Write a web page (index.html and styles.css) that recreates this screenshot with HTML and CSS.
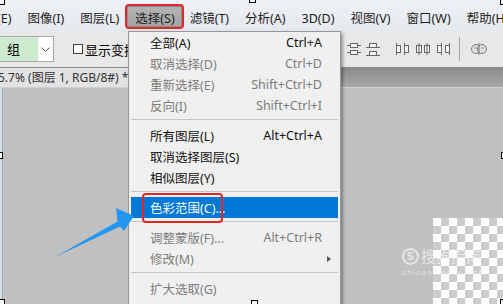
FILE: index.html
```html
<!DOCTYPE html>
<html lang="zh-CN">
<head>
    <meta charset="UTF-8">
    <title>选择菜单</title>
    <link rel="stylesheet" href="styles.css">
</head>
<body>
<div id="app">
    <ul class="menubar">
        <li class="menubar-item first">编辑(E)</li>
        <li class="menubar-item">图像(I)</li>
        <li class="menubar-item">图层(L)</li>
        <li class="menubar-item open">选择(S)<span class="mark"></span></li>
        <li class="menubar-item">滤镜(T)</li>
        <li class="menubar-item">分析(A)</li>
        <li class="menubar-item">3D(D)</li>
        <li class="menubar-item">视图(V)</li>
        <li class="menubar-item">窗口(W)</li>
        <li class="menubar-item">帮助(H)</li>
    </ul>

    <div class="options">
        <div class="select">
            <span class="select-value">组</span>
            <span class="select-arrow">
                <svg width="9" height="5" viewBox="0 0 9 5"><polyline points="0.5,0.5 4.5,4.5 8.5,0.5" fill="none" stroke="#555"/></svg>
            </span>
        </div>
        <label class="check"><span class="check-box"></span>显示变换控件</label>
        <div class="tools">
            <!-- distribute vertical centers -->
            <svg class="tool t-a" width="16" height="16" viewBox="0 0 16 16">
                <path d="M1 4.5H15M1 11.5H15" stroke="#666"/>
                <rect x="4.5" y="2.5" width="7" height="4" fill="#f4f4f4" stroke="#666"/>
                <rect x="4.5" y="9.5" width="7" height="4" fill="#f4f4f4" stroke="#666"/>
            </svg>
            <!-- distribute bottom edges -->
            <svg class="tool t-b" width="16" height="16" viewBox="0 0 16 16">
                <path d="M1 6.5H15M1 14.5H15" stroke="#666"/>
                <rect x="4.5" y="2.5" width="7" height="4" fill="#f4f4f4" stroke="#666"/>
                <rect x="4.5" y="10.5" width="7" height="4" fill="#f4f4f4" stroke="#666"/>
            </svg>
            <!-- distribute left edges -->
            <svg class="tool t-c" width="16" height="16" viewBox="0 0 16 16">
                <path d="M1.5 2V14M9.5 2V14" stroke="#666"/>
                <rect x="1.5" y="4.5" width="4" height="7" fill="#f4f4f4" stroke="#666"/>
                <rect x="9.5" y="4.5" width="4" height="7" fill="#f4f4f4" stroke="#666"/>
            </svg>
            <!-- distribute horizontal centers -->
            <svg class="tool t-d" width="16" height="16" viewBox="0 0 16 16">
                <rect x="1.5" y="4.5" width="5" height="7" fill="#f4f4f4" stroke="#666"/>
                <rect x="9.5" y="4.5" width="5" height="7" fill="#f4f4f4" stroke="#666"/>
                <path d="M4 2V14M12 2V14" stroke="#666"/>
            </svg>
            <!-- distribute right edges -->
            <svg class="tool t-e" width="16" height="16" viewBox="0 0 16 16">
                <path d="M6.5 2V14M14.5 2V14" stroke="#666"/>
                <rect x="2.5" y="4.5" width="4" height="7" fill="#f4f4f4" stroke="#666"/>
                <rect x="10.5" y="4.5" width="4" height="7" fill="#f4f4f4" stroke="#666"/>
            </svg>
            <span class="tool-sep"></span>
            <!-- 3D mode -->
            <svg class="tool t-f" width="16" height="16" viewBox="0 0 16 16">
                <circle cx="5" cy="8" r="4.5" fill="#e0e0e0" stroke="#7a7a7a"/>
                <circle cx="11" cy="8" r="4.5" fill="#e0e0e0" stroke="#7a7a7a"/>
                <path d="M8 2V14" stroke="#7a7a7a"/>
                <path d="M3 7H6M10 7H13" stroke="#999"/>
            </svg>
        </div>
    </div>

    <div class="tabs">
        <div class="tab">5.7% (图层 1, RGB/8#) *</div>
    </div>

    <div class="workspace">
        <div class="panel-edge"></div>
        <div class="doc"></div>
    </div>

    <ul class="dropdown">
        <li class="dropdown-item"><span class="label">全部(A)</span><span class="key">Ctrl+A</span><span class="sub"></span></li>
        <li class="dropdown-item off"><span class="label">取消选择(D)</span><span class="key">Ctrl+D</span><span class="sub"></span></li>
        <li class="dropdown-item off"><span class="label">重新选择(E)</span><span class="key">Shift+Ctrl+D</span><span class="sub"></span></li>
        <li class="dropdown-item off"><span class="label">反向(I)</span><span class="key">Shift+Ctrl+I</span><span class="sub"></span></li>
        <li class="sep"></li>
        <li class="dropdown-item"><span class="label">所有图层(L)</span><span class="key">Alt+Ctrl+A</span><span class="sub"></span></li>
        <li class="dropdown-item"><span class="label">取消选择图层(S)</span><span class="sub"></span></li>
        <li class="dropdown-item"><span class="label">相似图层(Y)</span><span class="sub"></span></li>
        <li class="sep"></li>
        <li class="dropdown-item active"><span class="label">色彩范围(C)...</span><span class="sub"></span><span class="mark"></span></li>
        <li class="sep"></li>
        <li class="dropdown-item off"><span class="label">调整蒙版(F)...</span><span class="key">Alt+Ctrl+R</span><span class="sub"></span></li>
        <li class="dropdown-item off"><span class="label">修改(M)</span><span class="sub"><i class="caret"></i></span></li>
        <li class="sep"></li>
        <li class="dropdown-item off"><span class="label">扩大选取(G)</span><span class="sub"></span></li>
        <li class="dropdown-item off"><span class="label">选取相似(R)</span><span class="sub"></span></li>
    </ul>

    <svg class="pointer" width="90" height="62" viewBox="50 200 90 62">
        <polygon points="55,257 117.5,221.5 116,208 134,216 124,231 120,226.5" fill="#2196f3"/>
    </svg>

    <div class="watermark">
        <div class="wm-top"><span class="wm-logo">S</span><span class="wm-name">搜狗指南</span></div>
        <div class="wm-url">zhinan.sogou.com</div>
    </div>

    <span class="handle h-tl"></span>
    <span class="handle h-tm"></span>
    <span class="handle h-tr"></span>
    <span class="handle h-ml"></span>
    <span class="handle h-mr"></span>
    <span class="handle h-bl"></span>
    <span class="handle h-bm"></span>
    <span class="handle h-br"></span>
</div>
</body>
</html>
```

FILE: styles.css
```css
* {
    margin: 0;
    padding: 0;
    box-sizing: border-box;
}
ul, li {
    list-style: none;
}
html, body {
    width: 503px;
    height: 304px;
    overflow: hidden;
}
body {
    font-family: "Noto Sans", "Noto Sans CJK SC", sans-serif;
    font-size: 12.5px;
    color: #000;
    background: #c0c0c0;
}
#app {
    position: relative;
    width: 503px;
    height: 304px;
    overflow: hidden;
    display: flex;
    flex-direction: column;
}

/* menu bar */
.menubar {
    height: 31px;
    flex: none;
    display: flex;
    align-items: flex-start;
    padding-top: 6px;
    background: linear-gradient(#eef1f5, #e5e9ee);
    white-space: nowrap;
}
.menubar-item {
    position: relative;
    height: 21px;
    line-height: 25px;
    padding: 0 8px;
    color: #1e1e1e;
}
.menubar-item.first {
    margin-left: -36px;
}
.menubar-item.open {
    padding: 0 7px 0 8px;
    background: linear-gradient(#b3b3b3, #a3a3a3);
    box-shadow: inset 0 0 0 1px #8e8e8e;
}
.mark {
    position: absolute;
    border: 2.5px solid #e3262a;
    border-radius: 4px;
}
.menubar-item .mark {
    left: -2px;
    right: -2px;
    top: -2px;
    bottom: -2px;
}

/* options bar */
.options {
    height: 37px;
    flex: none;
    display: flex;
    align-items: center;
    background: #e8e8e8;
    border-bottom: 1px solid #8a8a8a;
    font-size: 13px;
}
.select {
    display: flex;
    height: 26px;
    width: 54px;
    border: 1px solid #a8a8a8;
    border-left: 0;
    background: #fff;
}
.select-value {
    width: 38px;
    padding-left: 7px;
    line-height: 24px;
    background: #cdeccf;
}
.select-arrow {
    flex: 1;
    display: flex;
    align-items: center;
    justify-content: center;
}
.check {
    display: flex;
    align-items: center;
    margin-left: 19px;
    white-space: nowrap;
}
.check-box {
    width: 10px;
    height: 10px;
    margin-right: 2px;
    border: 1px solid #3c3c3c;
    background: #fff;
}
.tools {
    margin-left: auto;
    display: flex;
    align-items: center;
    height: 100%;
    padding-right: 16px;
}
.tool {
    display: block;
}
.t-a {
    margin-right: 3px;
}
.t-b {
    margin-right: 14px;
}
.t-c, .t-d {
    margin-right: 4px;
}
.tool-sep {
    width: 1px;
    height: 24px;
    margin: 0 11px 0 8px;
    background: #a6a6a6;
}

/* document tabs */
.tabs {
    height: 20px;
    flex: none;
    display: flex;
    background: linear-gradient(#8b8b8b, #a9a9a9);
    border-bottom: 1px solid #cfcfcf;
}
.tab {
    width: 200px;
    background: #e2e2e2;
    font-size: 12px;
    line-height: 19px;
    color: #333;
    text-indent: -2px;
    white-space: nowrap;
    overflow: hidden;
}

/* workspace */
.workspace {
    flex: 1;
    display: flex;
    background: #c0c0c0;
}
.panel-edge {
    width: 3px;
    background: #d6dce6;
    border-right: 1px solid #a3a8b0;
}
.doc {
    margin-left: auto;
    align-self: flex-end;
    width: 70px;
    height: 86px;
    background: conic-gradient(#cccccc 0 25%, #ffffff 0 50%, #cccccc 0 75%, #ffffff 0) 0 0 / 16px 16px;
}

/* select menu */
.dropdown {
    position: absolute;
    left: 128px;
    top: 31px;
    width: 213px;
    height: 290px;
    padding: 0 2px;
    background: #f0f0f0;
    border: 1px solid #979797;
    box-shadow: 2px 2px 3px rgba(0, 0, 0, 0.35);
    white-space: nowrap;
}
.dropdown-item {
    position: relative;
    display: flex;
    align-items: center;
    height: 21px;
    padding: 0 6px 0 19px;
    color: #111;
}
.dropdown-item.off {
    color: #7d7d7d;
}
.dropdown-item.active {
    background: #0078d7;
    color: #fff;
}
.label {
    flex: 1;
}
.sub {
    width: 10px;
    display: flex;
    align-items: center;
}
.caret {
    margin-left: 5px;
    border-left: 4px solid #555;
    border-top: 3.5px solid transparent;
    border-bottom: 3.5px solid transparent;
}
.sep {
    height: 1px;
    margin: 3px 0 5px;
    background: #c6c6c6;
}
.dropdown-item .mark {
    left: 11px;
    width: 81px;
    top: -4px;
    bottom: -5px;
}

/* annotation arrow */
.pointer {
    position: absolute;
    left: 50px;
    top: 200px;
}

/* watermark */
.watermark {
    position: absolute;
    left: 402px;
    top: 248px;
    color: rgba(255, 255, 255, 0.6);
}
.wm-top {
    display: flex;
    align-items: center;
}
.wm-logo {
    width: 17px;
    height: 17px;
    border: 2px solid rgba(255, 255, 255, 0.6);
    border-radius: 50%;
    font: bold 11px/13px "DejaVu Sans", sans-serif;
    text-align: center;
}
.wm-name {
    margin-left: 2px;
    font-size: 15px;
    line-height: 17px;
}
.wm-url {
    margin-top: 5px;
    font: 7px/7px "DejaVu Sans", sans-serif;
    letter-spacing: 1.3px;
}

/* frame handles */
.handle {
    position: absolute;
    width: 7px;
    height: 7px;
    border: 1px solid #000;
    background: #fff;
}
.h-tl { left: -2px; top: -2px; }
.h-tm { left: 249px; top: -4px; }
.h-tr { left: 500px; top: -2px; }
.h-ml { left: -4px; top: 152px; }
.h-mr { left: 501px; top: 152px; }
.h-bl { left: -2px; top: 299px; }
.h-bm { left: 251px; top: 300px; }
.h-br { left: 500px; top: 299px; }
```
